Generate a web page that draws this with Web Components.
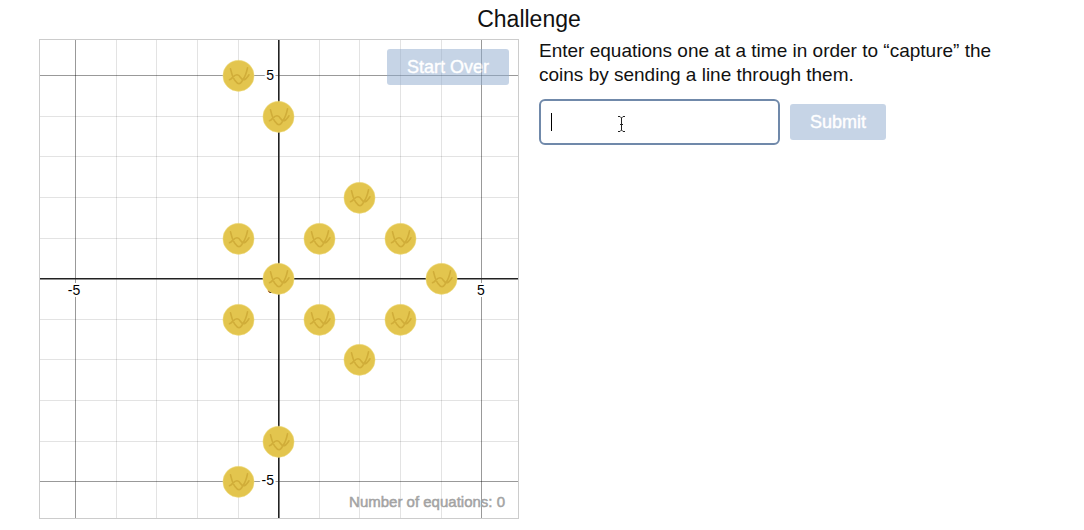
<!DOCTYPE html>
<html lang="en">
<head>
<meta charset="utf-8">
<title>Challenge</title>
<style>
  body { margin: 0; background: #fff; color: #111; font-family: "Liberation Sans", Arial, sans-serif; }
</style>
</head>
<body>
<challenge-page>
  <span slot="title">Challenge</span>
  <coin-board slot="board" equations="0" coins="-1,5 0,4 2,2 -1,1 1,1 3,1 0,0 4,0 -1,-1 1,-1 3,-1 2,-2 0,-4 -1,-5"></coin-board>
  <equation-form slot="panel">Enter equations one at a time in order to “capture” the coins by sending a line through them.</equation-form>
</challenge-page>
<script>
class ChallengePage extends HTMLElement {
  constructor() {
    super();
    this.attachShadow({ mode: 'open' }).innerHTML = `
      <style>
        :host { display: block; padding: 0 65px 11px 39px; }
        h1 { margin: 0; line-height: 39px; font-size: 23px; font-weight: 400; text-align: center; }
        .columns { display: grid; grid-template-columns: minmax(0, 1fr) minmax(0, 1fr); gap: 20px; align-items: start; }
      </style>
      <h1><slot name="title"></slot></h1>
      <main class="columns"><slot name="board"></slot><slot name="panel"></slot></main>`;
  }
}

class ActionButton extends HTMLElement {
  constructor() {
    super();
    this.attachShadow({ mode: 'open' }).innerHTML = `
      <style>
        :host { display: inline-block; }
        button {
          display: block; box-sizing: border-box; height: 36px; padding: 0 20px; border: 0; border-radius: 3px;
          background: #8fabcf; color: #fff; font: 18px "Liberation Sans", Arial, sans-serif;
          -webkit-text-stroke: .4px #fff; opacity: .5; white-space: nowrap;
        }
      </style>
      <button type="button" disabled><slot></slot></button>`;
  }
}

class CoinBoard extends HTMLElement {
  constructor() {
    super();
    const unit = 40.6, mid = 239;
    const at = n => Math.round(mid + n * unit - 0.8);
    let grid = '';
    for (let n = -5; n <= 5; n++) {
      if (n === 0) continue;
      const cls = Math.abs(n) === 5 ? 'major' : 'minor';
      grid += `<path class="${cls}" d="M${at(n)}.5 0V478M0 ${at(n)}.5H478"/>`;
    }
    const coins = this.getAttribute('coins').split(' ').map(pair => {
      const [x, y] = pair.split(',').map(Number);
      return `<use href="#coin" x="${at(x) + 0.5}" y="${at(-y) + 0.8}"/>`;
    }).join('');
    this.attachShadow({ mode: 'open' }).innerHTML = `
      <style>
        :host { display: block; position: relative; border: 1px solid #ccc; }
        svg { display: block; width: 100%; height: auto; }
        path { fill: none; }
        .minor { stroke: #000; stroke-opacity: .11; }
        .major { stroke: #000; stroke-opacity: .4; }
        .axis { stroke: #222; stroke-width: 1.6; }
        text { font: 14px "Liberation Sans", Arial, sans-serif; fill: #000; stroke: #fff; stroke-width: 4px; paint-order: stroke; }
        .disc { fill: #e3c54e; stroke: #f0e08a; stroke-width: .5; }
        .mark { stroke: #d0ad39; stroke-width: 1.6; stroke-linecap: round; }
        action-button { position: absolute; top: 9px; right: 9px; }
        output { position: absolute; right: 13px; bottom: 8px; font-size: 15px; line-height: 16px; color: #a3a3a3; -webkit-text-stroke: .5px #a3a3a3; }
      </style>
      <svg viewBox="0 0 478 478" role="img" aria-label="Coordinate plane with coins">
        <defs>
          <g id="coin">
            <circle class="disc" r="15.6"/>
            <path class="mark" d="M-8-7C-7-2-5.500 1.500-4 4M9-8C8-3 6.500 1 4.500 3.500M-9 4C-6 3-5-1-1.500-1C2-1 2 4 5 4C7.500 4 9 1 10.500-1M-4 4C-2.500 6-1.500 8 .5 8C2.500 8 3.500 5.500 4.500 3.500"/>
          </g>
        </defs>
        ${grid}
        <path class="axis" d="M238.8 0V478M0 238.8H478"/>
        <text x="234" y="40" text-anchor="end">5</text>
        <text x="234" y="445" text-anchor="end">-5</text>
        <text x="34" y="255" text-anchor="middle">-5</text>
        <text x="441" y="255" text-anchor="middle">5</text>
        <text x="235" y="253" text-anchor="end">0</text>
        ${coins}
      </svg>
      <action-button>Start Over</action-button>
      <output>Number of equations: ${this.getAttribute('equations')}</output>`;
  }
}

class EquationForm extends HTMLElement {
  constructor() {
    super();
    this.attachShadow({ mode: 'open' }).innerHTML = `
      <style>
        :host { display: block; }
        label { display: block; font-size: 19px; line-height: 24px; }
        .row { display: flex; align-items: center; gap: 10px; margin-top: 12px; }
        .field { position: relative; flex: 0 1 241px; min-width: 0; }
        input {
          display: block; box-sizing: border-box; width: 100%; height: 46px; padding: 0 11px;
          border: 2px solid #7089aa; border-radius: 6px; background: #fff; outline: 0;
          font: 18px "Liberation Sans", Arial, sans-serif; caret-color: transparent;
        }
        .caret { position: absolute; left: 12px; top: 14px; width: 1px; height: 18px; background: #000; }
        .pointer { position: absolute; left: 78px; top: 16px; width: 9px; height: 18px; fill: none; stroke: #222; pointer-events: none; }
      </style>
      <label for="equation"><slot></slot></label>
      <div class="row">
        <div class="field">
          <input id="equation" type="text" autocomplete="off">
          <span class="caret"></span>
          <svg class="pointer" viewBox="0 0 9 18" aria-hidden="true"><path d="M1 1.5H3L4.500 3L6 1.5H8M4.500 3V15M1 16.5H3L4.500 15L6 16.5H8M3 9.5H6"/></svg>
        </div>
        <action-button>Submit</action-button>
      </div>`;
  }
}

customElements.define('action-button', ActionButton);
customElements.define('coin-board', CoinBoard);
customElements.define('equation-form', EquationForm);
customElements.define('challenge-page', ChallengePage);
</script>
</body>
</html>
